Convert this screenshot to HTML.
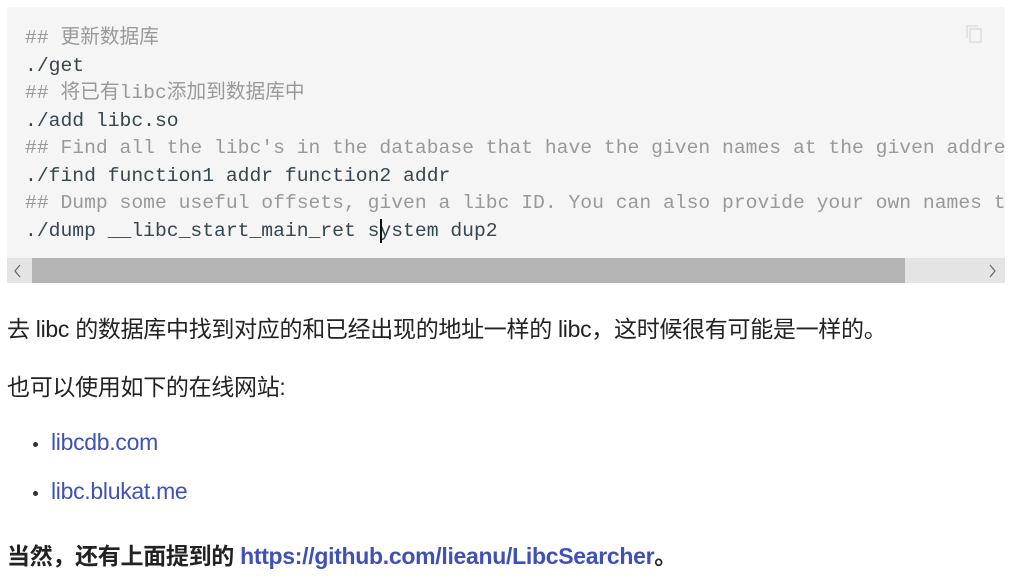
<!DOCTYPE html>
<html><head><meta charset="utf-8"><style>
body{margin:0;background:#fff;width:1012px;height:581px;overflow:hidden;font-family:"Liberation Sans","Noto Sans CJK SC",sans-serif;color:#222;}
.code{position:absolute;left:7px;top:7px;width:998px;height:276px;background:#f5f5f5;overflow:hidden}
pre{margin:0;position:absolute;left:18px;top:18px;font-family:"Liberation Mono","Noto Sans CJK SC",monospace;font-size:19.7px;line-height:27.5px;color:#36464e;white-space:pre}
.c{color:#999}
.sb{position:absolute;left:0;top:251px;width:998px;height:25px;background:#e4e4e4}
.th{position:absolute;left:25px;top:0;width:873px;height:25px;background:#b4b4b4}
.cur{position:absolute;left:373px;top:212px;width:2px;height:24px;background:#111}
p{position:absolute;left:7px;margin:0;font-size:23px;white-space:nowrap;letter-spacing:-0.3px}
a{color:#4051b5;text-decoration:none}
.dot{position:absolute;left:33px;width:5px;height:5px;border-radius:50%;background:#333}
</style></head><body>
<div class="code">
<pre><span class="c">## 更新数据库</span>
./get
<span class="c">## 将已有libc添加到数据库中</span>
./add libc.so
<span class="c">## Find all the libc's in the database that have the given names at the given address</span>
./find function1 addr function2 addr
<span class="c">## Dump some useful offsets, given a libc ID. You can also provide your own names to dump</span>
./dump __libc_start_main_ret system dup2</pre>
<div class="cur"></div>
<svg style="position:absolute;left:957px;top:16px" width="22" height="22" viewBox="0 0 22 22" fill="none" stroke="#ddd" stroke-width="1.5"><path d="M3 15V3h11"/><rect x="6" y="6" width="11" height="13"/></svg>
<div class="sb"><div class="th"></div>
<svg style="position:absolute;left:6px;top:6px" width="10" height="14"><path d="M7 1L2 7l5 6" fill="none" stroke="#666" stroke-width="1.2"/></svg>
<svg style="position:absolute;left:980px;top:6px" width="10" height="14"><path d="M3 1l5 6-5 6" fill="none" stroke="#666" stroke-width="1.2"/></svg>
</div></div>
<p style="top:310px">去 libc 的数据库中找到对应的和已经出现的地址一样的 libc，这时候很有可能是一样的。</p>
<p style="top:368px">也可以使用如下的在线网站:</p>
<div class="dot" style="top:442px"></div><p style="left:51px;top:429px"><a>libcdb.com</a></p>
<div class="dot" style="top:491px"></div><p style="left:51px;top:478px"><a>libc.blukat.me</a></p>
<p style="top:537px;font-weight:bold">当然，还有上面提到的 <a>https://github.com/lieanu/LibcSearcher</a>。</p>
</body></html>
